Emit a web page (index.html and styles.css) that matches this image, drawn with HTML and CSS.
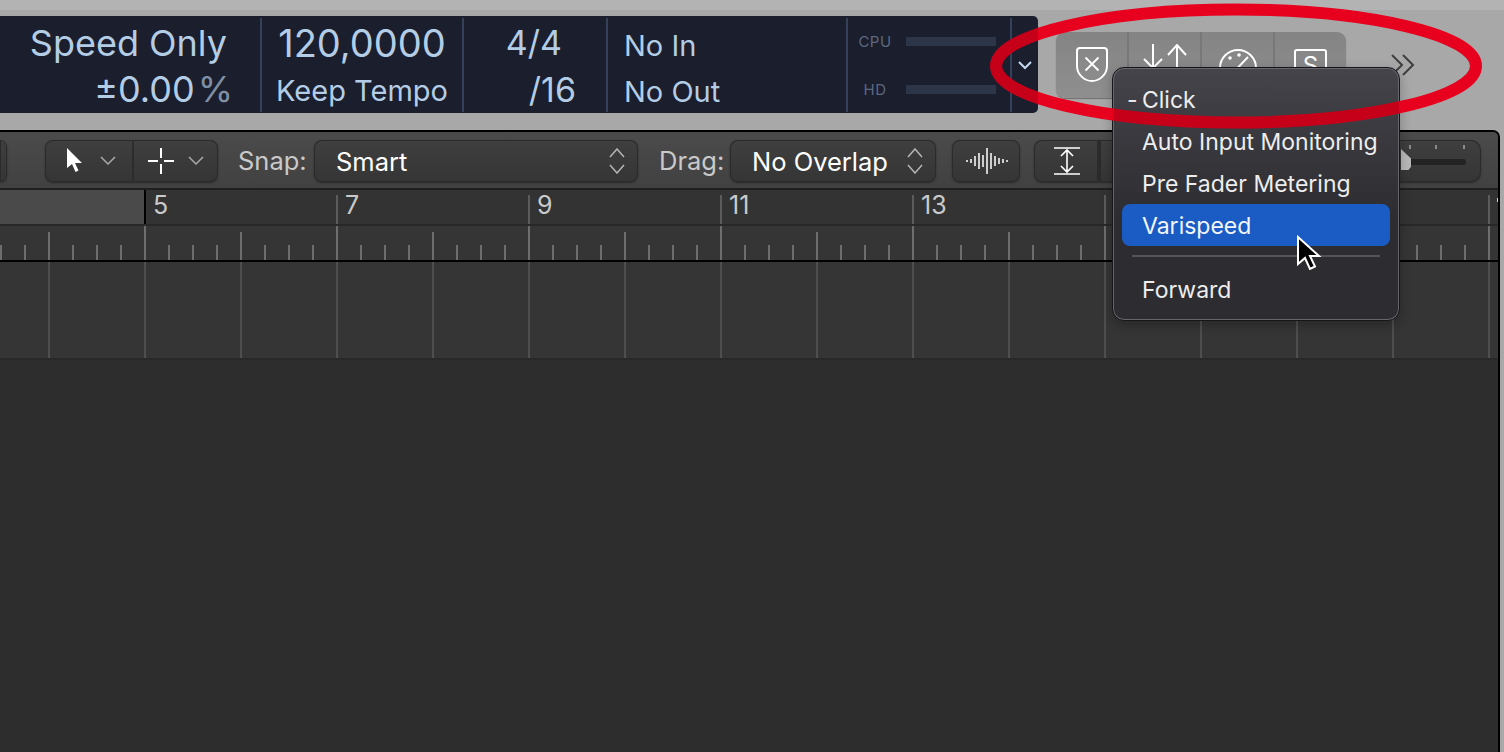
FILE: index.html
```html
<!DOCTYPE html>
<html lang="en">
<head>
    <meta charset="UTF-8">
    <title>Logic Pro - Varispeed</title>
    <link rel="stylesheet" href="styles.css">
</head>
<body>
    <div class="menubar"></div>

    <div class="transport">
        <div class="lcd">
            <div class="cell cell-speed">
                <div class="line-big">Speed Only</div>
                <div class="line-big percent-line">±0.00<span class="percent">%</span></div>
            </div>
            <div class="cell cell-tempo">
                <div class="line-big tempo-value">120,0000</div>
                <div class="line-small">Keep Tempo</div>
            </div>
            <div class="cell cell-sig">
                <div class="line-big sig-top">4/4</div>
                <div class="line-small sig-bottom">/16</div>
            </div>
            <div class="cell cell-io">
                <div class="line-small io-line">No In</div>
                <div class="line-small">No Out</div>
            </div>
            <div class="cell cell-meters">
                <div class="meter"><span class="meter-label">CPU</span><span class="meter-bar"></span></div>
                <div class="meter"><span class="meter-label">HD</span><span class="meter-bar"></span></div>
            </div>
            <div class="lcd-more">
                <svg width="16" height="10" viewBox="0 0 16 10"><path d="M2 2l6 6 6-6" fill="none" stroke="#c3d7ee" stroke-width="2"/></svg>
            </div>
        </div>

        <div class="control-group">
            <div class="control">
                <svg class="shield" width="36" height="38" viewBox="0 0 36 38" fill="none" stroke="#fff" stroke-width="2">
                    <path d="M6 2h24q3 0 3 3v15c0 9-8 15-15 15S3 29 3 20V5q0-3 3-3z"/>
                    <path d="M11.500 11.500l13 13M24.500 11.500l-13 13" stroke-width="1.800"/>
                </svg>
            </div>
            <div class="control">
                <svg width="44" height="46" viewBox="0 0 44 46" fill="none" stroke="#fff" stroke-width="2">
                    <path d="M10 0v24M1 15l9 9 9-9"/>
                    <path d="M34 46V1M25 11l9-10 9 10"/>
                </svg>
            </div>
            <div class="control">
                <svg class="dial" width="40" height="40" viewBox="0 0 40 40" fill="none" stroke="#fff" stroke-width="2">
                    <circle cx="20" cy="20" r="18"/>
                    <path d="M12 28L30 9"/>
                    <circle cx="12" cy="10" r="1.800" fill="#fff" stroke="none"/>
                    <circle cx="21" cy="7" r="1.800" fill="#fff" stroke="none"/>
                </svg>
            </div>
            <div class="control">
                <span class="solo-box">S</span>
            </div>
        </div>

        <svg class="overflow-arrows" width="24" height="22" viewBox="0 0 24 22" fill="none" stroke="#3f3f3f" stroke-width="2">
            <path d="M1 1l10 10L1 21M12 1l10 10-10 10"/>
        </svg>
    </div>

    <div class="window">
        <div class="toolbar">
            <div class="tool stub"></div>

            <div class="tool tool-pair">
                <div class="tool-half">
                    <svg width="18" height="26" viewBox="0 0 18 26"><path d="M1 0v20l5-4 3.500 8 3-1.500-3.500-7.500h7z" fill="#fff"/></svg>
                    <svg class="chev" width="16" height="10" viewBox="0 0 16 10"><path d="M1 1l7 7 7-7" fill="none" stroke="#aaa" stroke-width="1.5"/></svg>
                </div>
                <div class="tool-half">
                    <svg width="26" height="26" viewBox="0 0 26 26"><path d="M0 13h10M16 13h10M13 0v10M13 16v10" stroke="#fff" stroke-width="2"/></svg>
                    <svg class="chev" width="16" height="10" viewBox="0 0 16 10"><path d="M1 1l7 7 7-7" fill="none" stroke="#aaa" stroke-width="1.5"/></svg>
                </div>
            </div>

            <span class="tool-label snap-label">Snap:</span>
            <div class="tool select snap-select">
                <span>Smart</span>
                <svg width="16" height="26" viewBox="0 0 16 26" fill="none" stroke="#b5b5b5" stroke-width="1.5"><path d="M1 9l7-8 7 8M1 17l7 8 7-8"/></svg>
            </div>

            <span class="tool-label drag-label">Drag:</span>
            <div class="tool select drag-select">
                <span>No Overlap</span>
                <svg width="16" height="26" viewBox="0 0 16 26" fill="none" stroke="#b5b5b5" stroke-width="1.5"><path d="M1 9l7-8 7 8M1 17l7 8 7-8"/></svg>
            </div>

            <div class="tool wave-btn">
                <svg width="42" height="26" viewBox="0 0 42 26" stroke="#fff" stroke-width="1.500">
                    <path d="M1 12v2M5 11v4M9 8v10M13 5v16M17 7v12M21 0v26M25 5v16M29 8v10M33 10v6M37 11v4M41 12v2"/>
                </svg>
            </div>

            <div class="tool height-btn">
                <svg width="26" height="28" viewBox="0 0 26 28" fill="none" stroke="#fff" stroke-width="1.600">
                    <path d="M0 1h26M0 27h26M13 3v22M7 9l6-6 6 6M7 19l6 6 6-6"/>
                </svg>
            </div>

            <div class="tool zoom-box">
                <div class="zoom-ticks"><i></i><i></i><i></i></div>
                <div class="zoom-track"><span class="zoom-thumb"></span></div>
            </div>
        </div>

        <div class="ruler">
            <div class="ruler-cycle"></div>
            <div class="bar">5</div>
            <div class="bar">7</div>
            <div class="bar">9</div>
            <div class="bar">11</div>
            <div class="bar">13</div>
            <div class="bar"></div>
            <div class="bar"></div>
            <div class="bar bar-cut"></div>
        </div>
        <div class="ticks"></div>
        <div class="lane"></div>
        <div class="empty"></div>
    </div>

    <div class="menu">
        <div class="menu-item"><span class="menu-mark">-</span>Click</div>
        <div class="menu-item">Auto Input Monitoring</div>
        <div class="menu-item">Pre Fader Metering</div>
        <div class="menu-item active">Varispeed</div>
        <div class="menu-sep"></div>
        <div class="menu-item">Forward</div>
    </div>

    <svg class="pointer" width="28" height="38" viewBox="0 0 28 38">
        <path d="M3 2v27l7-6 5 11 5-2.500-5-10.500h9z" fill="#000" stroke="#fff" stroke-width="2"/>
    </svg>

    <svg class="annotation" width="1504" height="140" viewBox="0 0 1504 140" fill="none">
        <defs>
            <clipPath id="dark-parts">
                <rect x="0" y="16" width="1038" height="97"/>
                <rect x="1113" y="68" width="286" height="70"/>
            </clipPath>
        </defs>
        <ellipse cx="1236" cy="66" rx="240" ry="56.500" stroke="#e8001f" stroke-width="12"/>
        <ellipse cx="1236" cy="66" rx="240" ry="56.500" stroke="#000" stroke-opacity="0.14" stroke-width="12" clip-path="url(#dark-parts)"/>
    </svg>
</body>
</html>
```

FILE: styles.css
```css
* {
    box-sizing: border-box;
}

body {
    margin: 0;
    height: 752px;
    overflow: hidden;
    position: relative;
    background-color: #a8a8a8;
    font-family: Inter, "Liberation Sans", sans-serif;
}

.menubar {
    height: 10px;
    background-color: #b3b3b3;
}

/* top strip with the lcd */

.transport {
    height: 120px;
    display: flex;
    align-items: flex-start;
    background-color: #a8a8a8;
}

.lcd {
    width: 1038px;
    height: 97px;
    margin-top: 6px;
    display: flex;
    background-color: #1b1e2d;
    border-radius: 0 5px 5px 0;
    color: #b3cde6;
}

.cell {
    padding-top: 4px;
    margin: 2px 0 1px;
    border-right: 2px solid #33425a;
    white-space: nowrap;
}

.line-big {
    height: 46px;
    line-height: 46px;
    font-size: 36px;
    margin-top: -2px;
}

.line-big + .line-big {
    margin-top: 0;
}

.line-small {
    height: 46px;
    line-height: 50px;
    font-size: 29px;
}

.cell-speed {
    width: 262px;
    padding-right: 33px;
    text-align: right;
}

.percent-line {
    margin-right: -6px;
}

.percent {
    color: #7f90a5;
    margin-left: 3px;
}

.cell-tempo {
    width: 202px;
    text-align: center;
}

.tempo-value {
    font-size: 38px;
}

.cell-sig {
    width: 144px;
    text-align: right;
    padding-right: 30px;
}

.sig-top {
    margin-right: 14px;
    font-size: 34px;
}

.sig-bottom {
    font-size: 34px;
    line-height: 48px;
}

.cell-io {
    width: 240px;
    padding-left: 16px;
}

.io-line {
    margin-top: -1px;
}

.cell-meters {
    width: 164px;
    padding: 14px 0 0;
    display: flex;
    flex-direction: column;
    gap: 30px;
}

.meter {
    height: 18px;
    display: flex;
    align-items: center;
}

.meter-label {
    width: 48px;
    margin-left: 3px;
    text-align: center;
    font-size: 15px;
    letter-spacing: 0.5px;
    color: #5c6880;
}

.meter-bar {
    width: 90px;
    height: 9px;
    margin-left: 7px;
    background-color: #2d3548;
}

.lcd-more {
    flex: 1;
    display: flex;
    align-items: center;
    justify-content: center;
}

.control-group {
    width: 290px;
    height: 66px;
    margin: 22px 0 0 18px;
    display: flex;
    border-radius: 9px;
    background: linear-gradient(#848484, #8f8f8f);
    box-shadow: 0 1px 1px #6f6f6f;
}

.control {
    flex: 1;
    display: flex;
    justify-content: center;
    padding-top: 12px;
    border-left: 2px solid #787878;
}

.control:first-child {
    border-left: none;
}

.shield {
    margin-top: 2px;
}

.dial {
    margin-top: 4px;
}

.solo-box {
    width: 33px;
    height: 34px;
    margin-top: 5px;
    border: 2px solid #fff;
    border-radius: 3px;
    color: #fff;
    font-size: 24px;
    line-height: 30px;
    text-align: center;
}

.overflow-arrows {
    margin: 44px 0 0 45px;
}

/* arrange window */

.window {
    margin-right: 4px;
    height: 622px;
    display: flex;
    flex-direction: column;
    overflow: hidden;
    border-top: 2px solid #000;
    border-right: 2px solid #000;
    border-top-right-radius: 7px;
    background-color: #2d2d2d;
}

.toolbar {
    height: 58px;
    flex-shrink: 0;
    display: flex;
    align-items: flex-start;
    padding-top: 8px;
    background: linear-gradient(#4b4b4b, #414141);
    border-bottom: 2px solid #1f1f1f;
    color: #fff;
    font-size: 25.500px;
}

.tool {
    height: 42px;
    flex-shrink: 0;
    display: flex;
    align-items: center;
    border-radius: 8px;
    background: linear-gradient(#3f3f3f, #353535);
    box-shadow: inset 0 0 0 1px #2b2b2b, 0 1px 2px #2a2a2a;
}

.stub {
    width: 7px;
    border-radius: 0 7px 7px 0;
}

.tool-pair {
    width: 173px;
    margin-left: 38px;
}

.tool-half {
    width: 87px;
    height: 100%;
    display: flex;
    align-items: center;
    padding-left: 21px;
    gap: 16px;
}

.tool-half + .tool-half {
    width: 86px;
    padding-left: 14px;
    gap: 14px;
    border-left: 2px solid #2c2c2c;
}

.tool-label {
    color: #c9c9c9;
    line-height: 42px;
}

.snap-label {
    margin-left: 20px;
    width: 76px;
}

.select {
    justify-content: space-between;
    padding: 0 13px 0 22px;
}

.snap-select {
    width: 324px;
}

.drag-label {
    margin-left: 21px;
    width: 71px;
}

.drag-select {
    width: 206px;
}

.wave-btn {
    width: 68px;
    margin-left: 16px;
    padding-left: 2px;
    justify-content: center;
}

.height-btn {
    width: 66px;
    margin-left: 14px;
    padding-left: 20px;
    border-radius: 8px 0 0 8px;
    border-right: 2px solid #2c2c2c;
}

.zoom-box {
    width: 381px;
    position: relative;
    border-radius: 0 10px 10px 0;
}

.zoom-ticks i {
    position: absolute;
    top: 5px;
    width: 2px;
    height: 4px;
    background-color: #8a8a8a;
}

.zoom-ticks i:nth-child(1) { left: 309px; }
.zoom-ticks i:nth-child(2) { left: 335px; }
.zoom-ticks i:nth-child(3) { left: 363px; }

.zoom-track {
    position: absolute;
    left: 301px;
    top: 19px;
    width: 65px;
    height: 6px;
    border-radius: 3px;
    background-color: #232323;
}

.zoom-thumb {
    position: absolute;
    left: 0;
    top: -10px;
    width: 10px;
    height: 21px;
    background-color: #b8b8b8;
    clip-path: polygon(0 0, 100% 45%, 100% 85%, 75% 100%, 0 100%);
}

/* ruler and tracks */

.ruler {
    height: 36px;
    flex-shrink: 0;
    display: flex;
    background-color: #333;
    border-bottom: 2px solid #282828;
}

.ruler-cycle {
    width: 144px;
    flex-shrink: 0;
    background-color: #4a4a4a;
}

.bar {
    width: 192px;
    flex-shrink: 0;
    margin-top: 5px;
    padding-left: 7px;
    border-left: 2px solid #5c5c5c;
    color: #cacaca;
    font-size: 25px;
    line-height: 21px;
}

.ruler-cycle + .bar {
    margin-top: 0;
    padding-top: 5px;
    border-left-color: #000;
}

/* only the first pixels of the next number fit before the window edge */
.bar-cut::after {
    content: "";
    display: block;
    width: 2px;
    height: 4px;
    margin-top: 3px;
    background-color: #cacaca;
}

.ticks {
    height: 34px;
    flex-shrink: 0;
    background-color: #353535;
    background-image:
        linear-gradient(90deg, #6d6d6d 2px, transparent 2px),
        linear-gradient(90deg, #6d6d6d 2px, transparent 2px),
        linear-gradient(90deg, #6d6d6d 2px, transparent 2px);
    background-size: 192px 100%, 96px 28px, 24px 15px;
    background-position: 144px 0, 48px 100%, 0 100%;
    background-repeat: repeat-x;
}

.lane {
    height: 100px;
    flex-shrink: 0;
    background-color: #353535;
    background-image: linear-gradient(90deg, #4e4e4e 2px, transparent 2px);
    background-size: 96px 100%;
    background-position: 48px 0;
    background-repeat: repeat-x;
    border-top: 2px solid #000;
    border-bottom: 2px solid #292929;
}

.empty {
    flex: 1;
}

/* popup menu */

.menu {
    position: absolute;
    left: 1112px;
    top: 67px;
    width: 288px;
    height: 254px;
    padding: 10px 9px 0;
    border: 1px solid #16161a;
    border-radius: 12px;
    background: linear-gradient(#45444a, #2c2c31 60%);
    box-shadow: inset 0 0 0 1px #66666c, 0 4px 12px rgba(0, 0, 0, 0.25);
    color: #ededed;
    font-size: 23px;
}

.menu-item {
    height: 42px;
    line-height: 45px;
    padding-left: 20px;
    position: relative;
    border-radius: 8px;
    white-space: nowrap;
}

.menu-item.active {
    background-color: #1a5bc4;
    color: #f3f6fb;
}

.menu-mark {
    position: absolute;
    left: 5px;
}

.menu-sep {
    height: 2px;
    margin: 9px 10px 11px;
    background-color: #535358;
}

.pointer {
    position: absolute;
    left: 1295px;
    top: 235px;
}

.annotation {
    position: absolute;
    left: 0;
    top: 0;
}
```
